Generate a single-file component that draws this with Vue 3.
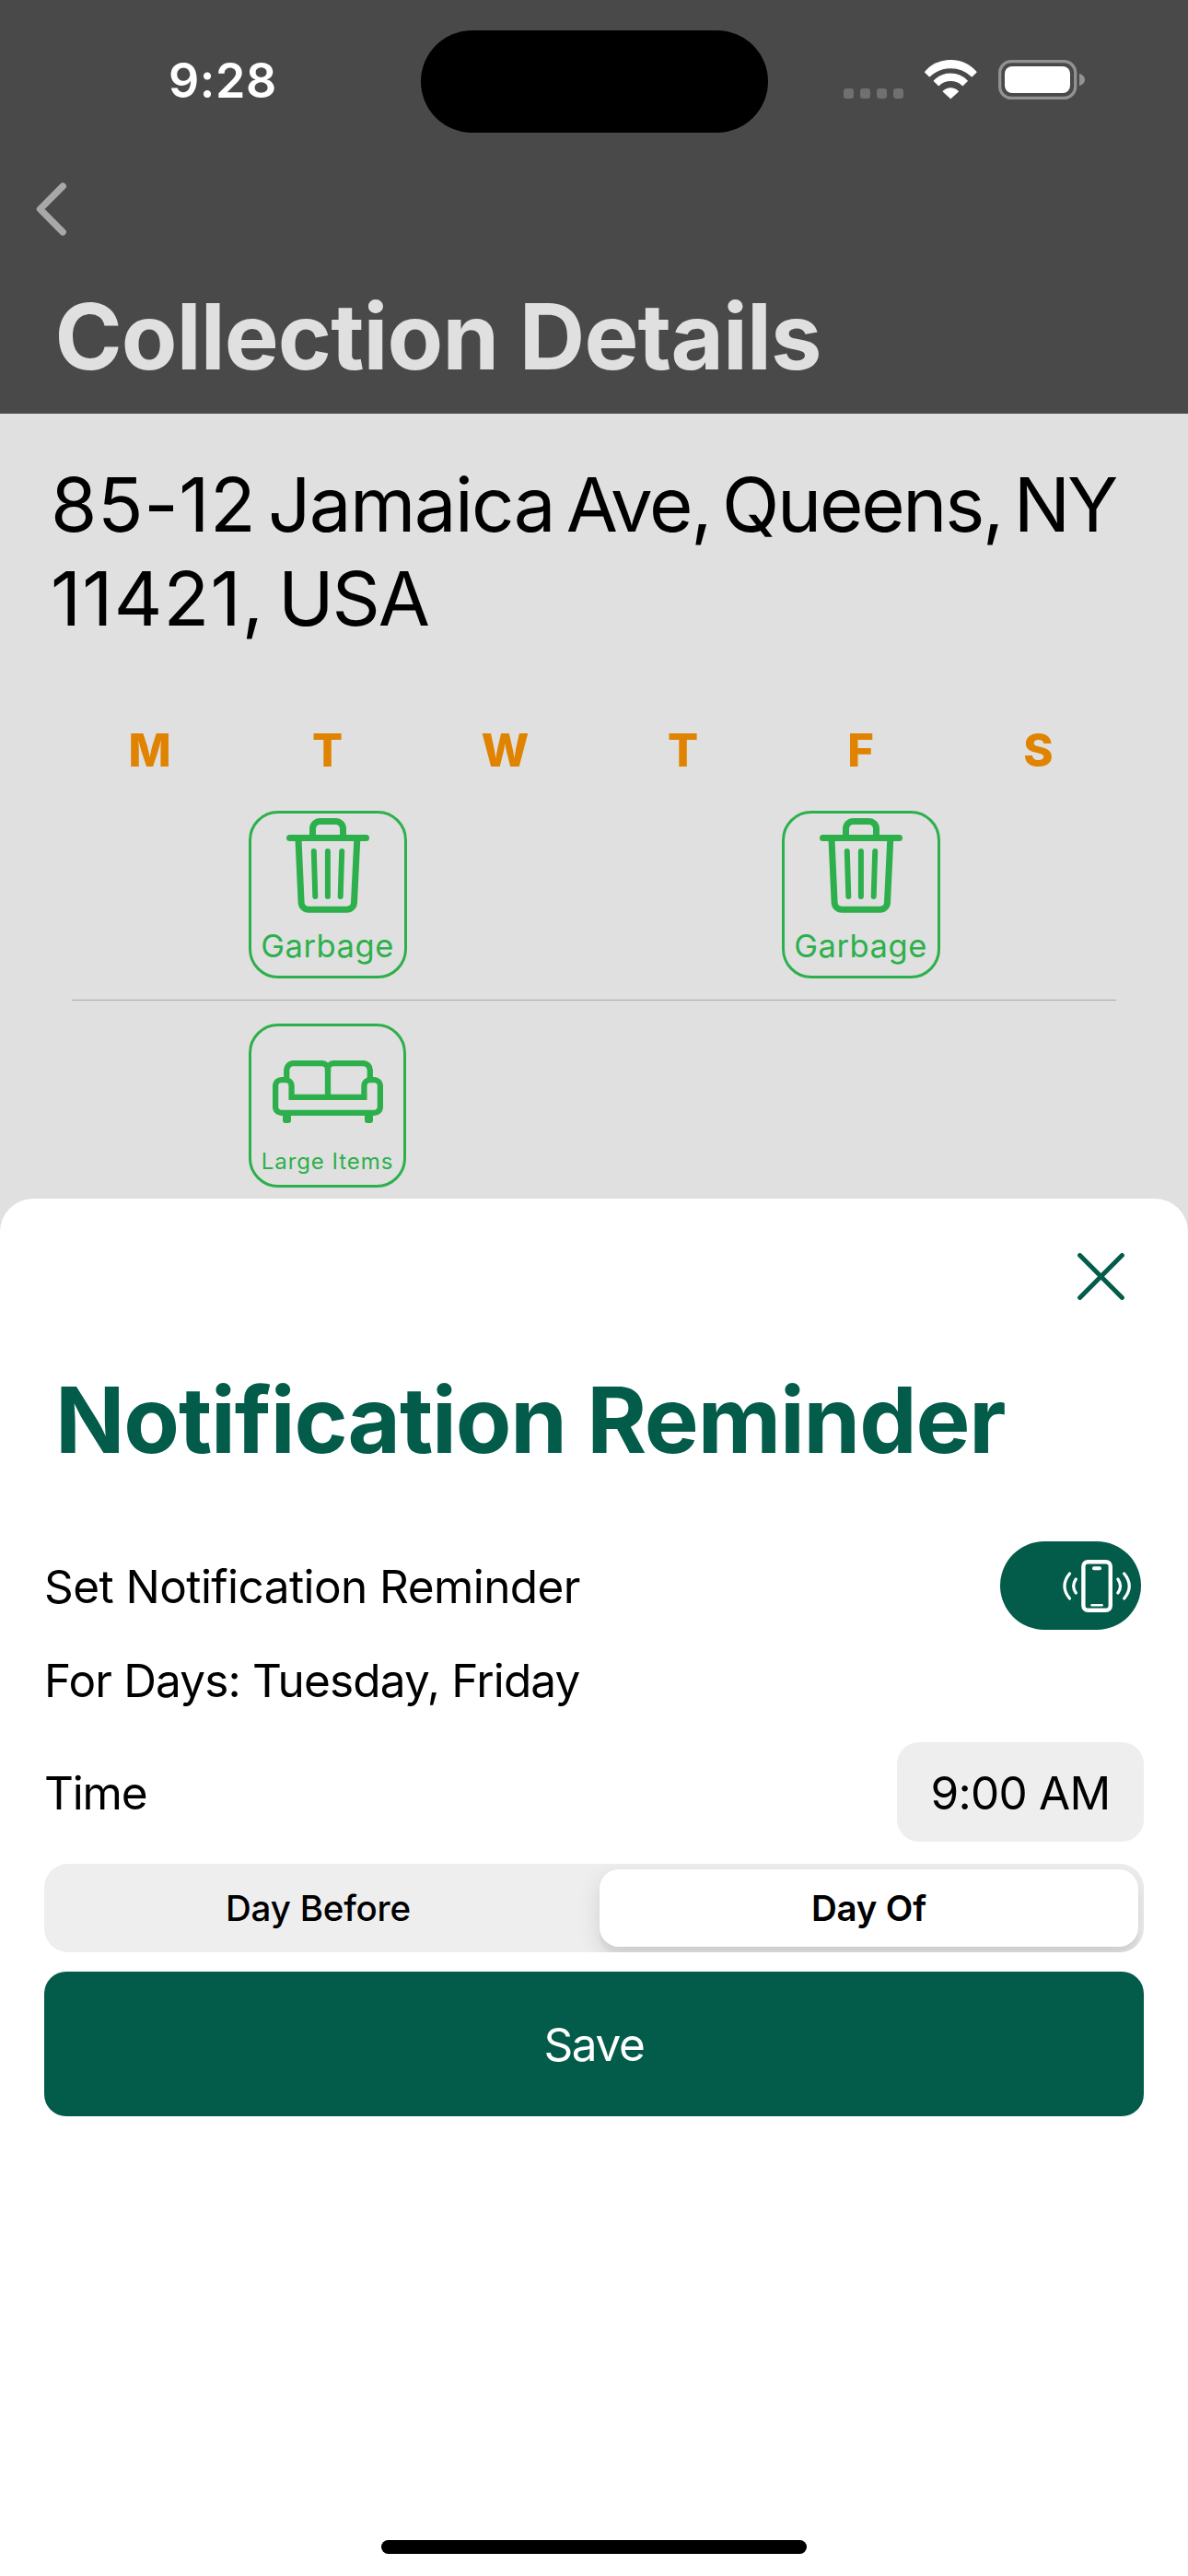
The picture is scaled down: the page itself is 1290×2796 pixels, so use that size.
<script setup>
import { ref } from 'vue'

const days = ['M', 'T', 'W', 'T', 'F', 'S']
const garbage = [false, true, false, false, true, false]
const timing = ref('Day Of')
const reminderOn = ref(true)
</script>

<template>
  <div class="screen">
    <header class="header">
      <div class="status">
        <span class="clock">9:28</span>
        <div class="island"></div>
        <svg class="signals" viewBox="0 0 262 45" width="262" height="45">
          <g fill="#707070">
            <rect v-for="n in 4" :key="n" :x="(n - 1) * 18" y="32" width="11" height="11" rx="3.2" />
          </g>
          <g fill="#fff" stroke="#fff" stroke-width="1.2" stroke-linejoin="round">
            <path d="M88.6 14.2A36.6 36.6 0 0 1 144 14.2L139.3 18.8A33.4 33.4 0 0 0 93.3 18.8Z" />
            <path d="M98.3 23.8A25 25 0 0 1 134.3 23.8L129.4 28.7A19 19 0 0 0 103.2 28.7Z" />
            <path d="M108.3 35.2A11 11 0 0 1 124.3 35.2L116.3 42.6Z" />
          </g>
          <rect x="169.7" y="2.6" width="82" height="39.8" rx="12.5" fill="none" stroke="#929292" stroke-width="3.3" />
          <rect x="175" y="8" width="71" height="29" rx="8" fill="#fff" />
          <path d="M256 15.8C260 17.2 262 19.6 262 22.5S260 27.8 256 29.2Z" fill="#929292" />
        </svg>
      </div>
      <div class="nav">
        <svg viewBox="0 0 34 58" width="34" height="58">
          <path d="M29.2 4.2L4.5 29L29.2 53.8" fill="none" stroke="#a8a8a8" stroke-width="7.4" stroke-linecap="round" stroke-linejoin="round" />
        </svg>
      </div>
      <h1 class="title">Collection Details</h1>
    </header>

    <main class="details">
      <div class="address">
        <div class="line first"><span class="number">85-12</span> Jamaica <span class="tight">Ave,</span> <span class="tight">Queens,</span> <span class="state">NY</span></div>
        <div class="line second"><span class="zip">11421,</span> <span class="country">USA</span></div>
      </div>
      <div class="week names">
        <div v-for="(d, i) in days" :key="i" class="day">{{ d }}</div>
      </div>
      <div class="week pickups">
        <div v-for="(g, i) in garbage" :key="i" class="cell">
          <div v-if="g" class="tile">
            <svg viewBox="0 0 90 103" width="90" height="103" fill="none" stroke="#2db04c" stroke-width="7">
              <path d="M28.5 20V11.5a8 8 0 0 1 8-8h17a8 8 0 0 1 8 8V20" />
              <path d="M3.5 21.4H86.5" stroke-linecap="round" />
              <path d="M13 23L16.1 91.5a8 8 0 0 0 8 7.7h41.4a8 8 0 0 0 8-7.7L76.8 23" />
              <path d="M29.8 36L31.3 85M44.9 36V85M60.2 36L58.7 85" stroke-width="6" stroke-linecap="round" />
            </svg>
            <span class="garbage">Garbage</span>
          </div>
        </div>
      </div>
      <div class="divider"></div>
      <div class="week bulk">
        <div class="cell"></div>
        <div class="cell">
          <div class="tile large">
            <svg viewBox="0 0 120 68" width="120" height="68" fill="none" stroke="#2db04c" stroke-width="6.3">
              <path d="M15.2 21V10.5a7.4 7.4 0 0 1 7.4-7.4H53.5a6.5 6.5 0 0 1 6.5 6.5V40" />
              <path d="M60 12V9.6a6.5 6.5 0 0 1 6.5-6.5H98.4a7.4 7.4 0 0 1 7.4 7.4V21" />
              <path d="M20.6 39.9V27.6a6.5 6.5 0 0 0-6.5-6.5H9.6a6.5 6.5 0 0 0-6.5 6.5V50.4a6.5 6.5 0 0 0 6.5 6.5H110.4a6.5 6.5 0 0 0 6.5-6.5V27.6a6.5 6.5 0 0 0-6.5-6.5H105.9a6.5 6.5 0 0 0-6.5 6.5V39.9Z" />
              <path d="M11 58h9v7a3 3 0 0 1-3 3h-3a3 3 0 0 1-3-3zM100 58h9v7a3 3 0 0 1-3 3h-3a3 3 0 0 1-3-3z" fill="#2db04c" stroke="none" />
            </svg>
            <span class="items">Large Items</span>
          </div>
        </div>
      </div>
    </main>

    <section class="sheet">
      <button class="close" type="button" aria-label="Close">
        <svg viewBox="0 0 51 51" width="51" height="51">
          <path d="M2.6 2.6L48.4 48.4M48.4 2.6L2.6 48.4" stroke="#035b4a" stroke-width="5" stroke-linecap="round" />
        </svg>
      </button>
      <h2 class="sheet-title">Notification Reminder</h2>
      <div class="row toggle-row">
        <span class="label set">Set Notification Reminder</span>
        <button class="toggle" type="button" :aria-pressed="reminderOn" @click="reminderOn = !reminderOn">
          <svg viewBox="0 0 74 57" width="74" height="57" fill="none" stroke="#fff" stroke-linecap="round">
            <rect x="22.4" y="2.2" width="29.4" height="52.6" rx="5" stroke-width="4.4" />
            <rect x="32" y="7.2" width="10" height="4" rx="1.8" fill="#fff" stroke="none" />
            <path d="M31.6 49.2H42.6" stroke-width="2.6" />
            <path d="M14.3 21Q9 28.5 14.3 36M59.9 21Q65.2 28.5 59.9 36M7.5 15Q-3.6 28.5 7.5 42M66.7 15Q77.8 28.5 66.7 42" stroke-width="3.2" />
          </svg>
        </button>
      </div>
      <div class="label for-days">For Days: Tuesday, Friday</div>
      <div class="row time-row">
        <span class="label time">Time</span>
        <span class="time-value">9:00 AM</span>
      </div>
      <div class="segments">
        <button
          v-for="option in ['Day Before', 'Day Of']"
          :key="option"
          type="button"
          class="segment"
          :class="{ active: timing === option }"
          @click="timing = option"
        >{{ option }}</button>
      </div>
      <button class="save" type="button">Save</button>
      <div class="home"></div>
    </section>
  </div>
</template>

<style>
body {
  background: #e0e0e0;
}
</style>

<style scoped>
.screen {
  width: 1290px;
  height: 2796px;
  display: flex;
  flex-direction: column;
  overflow: hidden;
  background: #e0e0e0;
  color: #000;
  font-family: Inter, "Liberation Sans", sans-serif;
}
button {
  border: 0;
  padding: 0;
  font-family: inherit;
  color: inherit;
  background: none;
}
svg {
  display: block;
  flex: none;
}
h1,
h2 {
  margin: 0;
  font-weight: 700;
  font-size: 99px;
  line-height: 120px;
  white-space: nowrap;
}
.header {
  height: 449px;
  flex: none;
  background: #494949;
}
.status {
  height: 143px;
  padding-top: 33px;
  display: flex;
  align-items: flex-start;
}
.clock {
  box-sizing: border-box;
  width: 456.5px;
  padding: 25px 0 0 183px;
  font-size: 52px;
  line-height: 60px;
  font-weight: 600;
  letter-spacing: 0.59px;
  color: #fff;
}
.island {
  width: 377px;
  height: 111px;
  border-radius: 56px;
  background: #000;
}
.signals {
  margin: 31px 0 0 82.5px;
}
.nav {
  height: 102px;
  padding-left: 38.5px;
  display: flex;
  align-items: center;
}
.title {
  margin: 27px 0 0 59.5px;
  letter-spacing: -0.86px;
  color: #e0e0e0;
}
.details {
  height: 852px;
  flex: none;
  background: #e0e0e0;
}
.address {
  padding: 47.5px 0 0 55px;
  font-size: 81.5px;
  line-height: 102px;
  white-space: nowrap;
}
.first {
  letter-spacing: -1.6px;
  word-spacing: -8.7px;
}
.number {
  letter-spacing: 0.6px;
}
.tight {
  letter-spacing: -2.3px;
}
.state {
  letter-spacing: -3px;
}
.second {
  word-spacing: -8.5px;
}
.zip {
  letter-spacing: 1.2px;
}
.country {
  letter-spacing: -2px;
}
.week {
  display: grid;
  grid-template-columns: repeat(6, 193px);
  padding-left: 66px;
}
.names {
  margin-top: 83.5px;
  text-align: center;
  font-size: 49px;
  line-height: 61px;
  height: 60px;
  font-weight: 850;
  color: #e08300;
}
.pickups {
  margin-top: 36px;
}
.cell {
  display: flex;
  justify-content: center;
}
.tile {
  box-sizing: border-box;
  width: 172px;
  height: 182px;
  padding-top: 5px;
  border: 3px solid #2db04c;
  border-radius: 32px;
  display: flex;
  flex-direction: column;
  align-items: center;
  color: #2db04c;
  white-space: nowrap;
}
.garbage {
  margin-top: 15.5px;
  font-size: 34.5px;
  line-height: 40px;
  letter-spacing: 0.56px;
}
.divider {
  height: 1px;
  margin: 23px 78px 25px;
  background: #a9a9a9;
}
.large {
  width: 171px;
  height: 178px;
  padding-top: 37px;
}
.items {
  margin-top: 26px;
  font-size: 24px;
  line-height: 31px;
  letter-spacing: 0.94px;
}
.sheet {
  box-sizing: border-box;
  height: 1495px;
  flex: none;
  display: flex;
  flex-direction: column;
  padding: 59px 48px 24px;
  border-radius: 36px 36px 0 0;
  background: #fff;
}
.close {
  align-self: flex-end;
  margin-right: 21.5px;
}
.sheet-title {
  margin: 70px 0 0 12px;
  letter-spacing: -1.13px;
  color: #035b4a;
}
.row {
  display: flex;
  align-items: center;
  justify-content: space-between;
}
.label {
  font-size: 49.5px;
  line-height: 60px;
  white-space: nowrap;
}
.toggle-row {
  height: 96px;
  margin-top: 72px;
}
.set {
  padding-top: 2px;
  letter-spacing: -0.57px;
}
.toggle {
  width: 153px;
  height: 96px;
  margin-right: 3px;
  padding-right: 11.5px;
  border-radius: 48px;
  background: #035b4a;
  display: flex;
  align-items: center;
  justify-content: flex-end;
}
.for-days {
  margin: 25px 0 0;
  letter-spacing: -0.84px;
}
.time-row {
  height: 108px;
  margin-top: 37px;
}
.time {
  padding-top: 2px;
  letter-spacing: -1.2px;
}
.time-value {
  width: 268px;
  border-radius: 24px;
  background: #eeeeef;
  font-size: 49.5px;
  line-height: 110px;
  height: 108px;
  text-align: center;
  letter-spacing: -0.75px;
}
.segments {
  box-sizing: border-box;
  height: 96px;
  flex: none;
  margin-top: 24px;
  padding: 6px;
  display: grid;
  grid-template-columns: 1fr 585px;
  border-radius: 26px;
  background: #eeeeef;
  overflow: hidden;
}
.segment {
  padding-right: 14px;
  font-size: 38.5px;
  font-weight: 450;
  letter-spacing: -0.2px;
  border-radius: 21px;
}
.active {
  padding-right: 0;
  font-weight: 600;
  background: #fff;
  box-shadow: 0 9px 24px rgba(0, 0, 0, 0.12), 0 9px 3px rgba(0, 0, 0, 0.04);
}
.save {
  height: 157px;
  flex: none;
  margin-top: 21px;
  border-radius: 24px;
  background: #035b4a;
  color: #fff;
  font-size: 49.5px;
  letter-spacing: -1.39px;
}
.home {
  width: 462px;
  height: 15px;
  margin: auto auto 0;
  border-radius: 8px;
  background: #000;
}
</style>
